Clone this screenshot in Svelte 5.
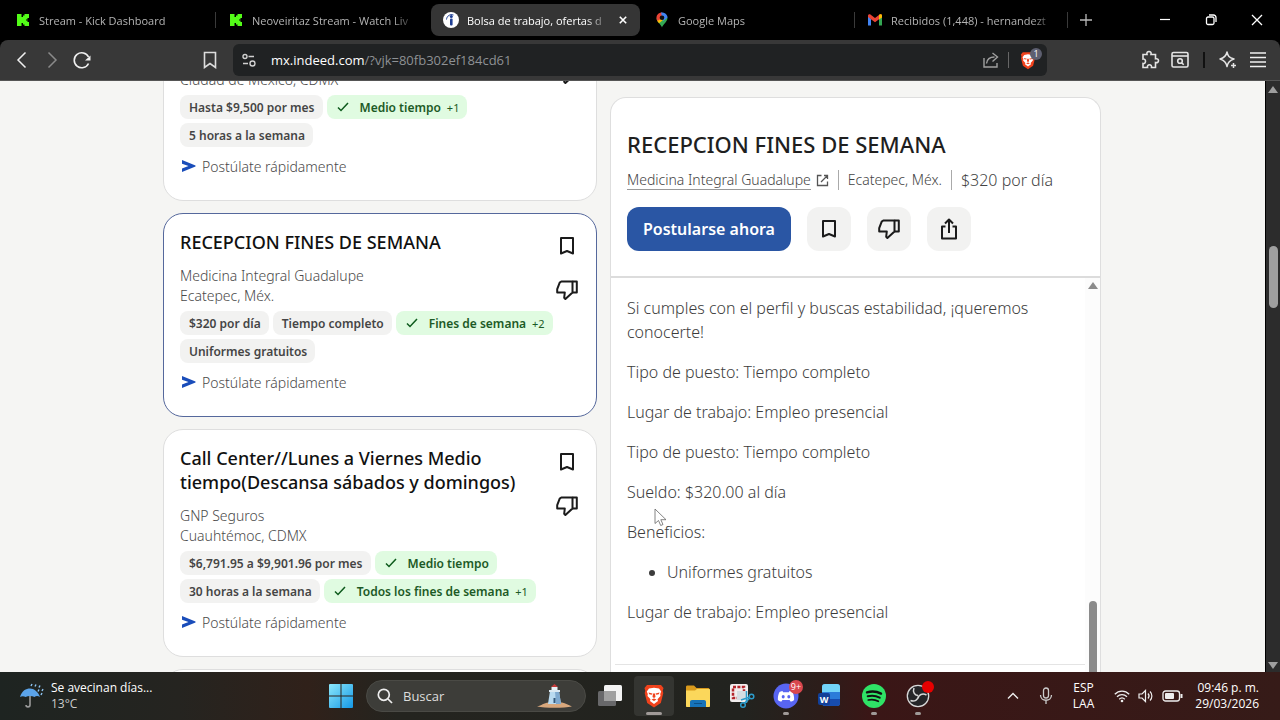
<script lang="ts">
	interface Chip {
		text: string;
		match?: boolean;
		extra?: string;
	}

	interface Job {
		id: number;
		title: string;
		company: string;
		location: string;
		chips: Chip[];
		selected?: boolean;
	}

	const tabs = [
		{ icon: 'kick', title: 'Stream - Kick Dashboard' },
		{ icon: 'kick', title: 'Neoveiritaz Stream - Watch Liv' },
		{ icon: 'indeed', title: 'Bolsa de trabajo, ofertas d', active: true },
		{ icon: 'maps', title: 'Google Maps' },
		{ icon: 'gmail', title: 'Recibidos (1,448) - hernandezt' }
	];

	const jobs: Job[] = [
		{
			id: 1,
			title: '',
			company: '',
			location: 'Ciudad de México, CDMX',
			chips: [
				{ text: 'Hasta $9,500 por mes' },
				{ text: 'Medio tiempo', match: true, extra: '+1' },
				{ text: '5 horas a la semana' }
			]
		},
		{
			id: 2,
			title: 'RECEPCION FINES DE SEMANA',
			company: 'Medicina Integral Guadalupe',
			location: 'Ecatepec, Méx.',
			selected: true,
			chips: [
				{ text: '$320 por día' },
				{ text: 'Tiempo completo' },
				{ text: 'Fines de semana', match: true, extra: '+2' },
				{ text: 'Uniformes gratuitos' }
			]
		},
		{
			id: 3,
			title: 'Call Center//Lunes a Viernes Medio tiempo(Descansa sábados y domingos)',
			company: 'GNP Seguros',
			location: 'Cuauhtémoc, CDMX',
			chips: [
				{ text: '$6,791.95 a $9,901.96 por mes' },
				{ text: 'Medio tiempo', match: true },
				{ text: '30 horas a la semana' },
				{ text: 'Todos los fines de semana', match: true, extra: '+1' }
			]
		}
	];

	const apps = ['taskview', 'brave', 'explorer', 'snip', 'discord', 'word', 'spotify', 'obs'];
	const running = ['discord', 'spotify', 'obs'];
</script>

{#snippet bookmark()}
	<svg width="24" height="24" viewBox="0 0 24 24" fill="none" stroke="#1b1b1b" stroke-width="2" stroke-linejoin="round">
		<path d="M6 4h12v15.500L12 17l-6 2.500z" />
	</svg>
{/snippet}

{#snippet thumbDown()}
	<svg width="24" height="24" viewBox="0 0 24 24" fill="none" stroke="#1b1b1b" stroke-width="2" stroke-linejoin="round">
		<path d="M17.500 3.500H6.300L4.700 4.600 2.200 11.200v3.300h7.600L9.200 19.700l1.200 1.300 7.100-6.600z" />
		<path d="M17.500 3.500h4.300v10.900h-4.300" />
	</svg>
{/snippet}

{#snippet favicon(name: string)}
	{#if name === 'kick'}
		<svg width="16" height="16" viewBox="0 0 16 16">
			<path fill="#53fc18" d="M2 2h4.500v3H8V3.500h1.500V2H14v4h-1.500v1.500H11v1h1.500V10H14v4H9.500v-1.500H8V11H6.500v3H2z" />
		</svg>
	{:else if name === 'indeed'}
		<svg width="16" height="16" viewBox="0 0 16 16">
			<circle cx="8" cy="8" r="8" fill="#fff" />
			<rect x="7" y="6.500" width="2.600" height="7" rx="1" fill="#1f3f94" />
			<circle cx="8.300" cy="4.500" r="1.500" fill="#1f3f94" />
			<path d="M3.500 7.500c.3-3.500 3.500-5.800 7-4.500" fill="none" stroke="#1f3f94" stroke-width="1" />
		</svg>
	{:else if name === 'maps'}
		<svg width="16" height="16" viewBox="0 0 16 16">
			<path fill="#34a853" d="M8 15.500C7 12 2.500 10 2.500 5.700h11C13.500 10 9 12 8 15.500z" />
			<path fill="#fbbc04" d="M2.800 7.500 6 5l3 3-4 3.200C4 10 3 9 2.800 7.500z" />
			<path fill="#ea4335" d="M2.500 5.700C2.500 2.700 5 .5 8 .5L8 6l-4.500 3c-.6-1-1-2-1-3.300z" />
			<path fill="#4285f4" d="M7 .6c3.300-.6 6.500 1.800 6.500 5.100L9 9z" />
			<circle cx="8" cy="5.800" r="2.300" fill="#101010" />
		</svg>
	{:else}
		<svg width="16" height="16" viewBox="0 0 16 16">
			<path fill="#4285f4" d="M1 4v9.500h3V7z" />
			<path fill="#34a853" d="M15 4v9.500h-3V7z" />
			<path fill="#ea4335" d="M1 3.500C1.300 2.300 2.700 2 3.700 2.800L8 6l4.300-3.200c1-.8 2.400-.5 2.700.7V5L8 10.200 1 5z" />
			<path fill="#fbbc04" d="M12 3l.6-.4c1-.6 2.400-.2 2.400 1V5.500L12 7.500z" />
		</svg>
	{/if}
{/snippet}

{#snippet lion()}
	<path fill="#f0421c" d="M5 1.500h14l2.500 3-.8 3 .6 2-2.500 10L12 24l-6.800-4.500-2.500-10 .6-2-.8-3z" />
	<path fill="#fff" d="M7 5l5-.8L17 5l2.200 3-1 2.500.3 2-3 3.300.5 1.700L12 20.500l-4-3 .5-1.700-3-3.300.3-2L4.800 8z" />
	<path fill="#f0421c" d="M6.500 9l4 1-.8 1.300-2.500-.5zM17.500 9l-4 1 .8 1.300 2.500-.5zM11 10h2l.5 3.500-1.500 1-1.500-1zM9.500 16l2.500-1 2.500 1-2.500 1.600z" />
{/snippet}

{#snippet appIcon(name: string)}
	{#if name === 'taskview'}
		<svg width="26" height="24" viewBox="0 0 26 24">
			<rect x="7" y="1" width="18" height="16" rx="1.500" fill="#f3f3f3" />
			<rect x="1" y="7" width="18" height="15" rx="1.500" fill="#68686a" />
			<path fill="#a0a0a0" d="M7 7h12v10H7z" />
		</svg>
	{:else if name === 'brave'}
		<svg width="24" height="26" viewBox="0 0 24 25">{@render lion()}</svg>
	{:else if name === 'explorer'}
		<svg width="26" height="24" viewBox="0 0 26 24">
			<path fill="#d99a1c" d="M1 3c0-1 .6-1.500 1.500-1.500H9l2.500 2.500H23c1 0 1.500.6 1.500 1.500V12H1z" />
			<path fill="#fbd75b" d="M1 6.500h9L12 5h12c.7 0 1 .4 1 1v16c0 .7-.4 1-1 1H2c-.7 0-1-.4-1-1z" />
			<path fill="#1672b8" d="M5 23v-5c0-1.300.8-2 2-2h12c1.200 0 2 .7 2 2v5z" />
			<path stroke="#0c4f86" d="M9 19.500h8" />
		</svg>
	{:else if name === 'snip'}
		<svg width="26" height="26" viewBox="0 0 26 26" fill="none">
			<rect x="1" y="1" width="18" height="18" rx="2" fill="#f2eeee" />
			<rect x="4" y="4" width="11" height="11" stroke="#b3262c" stroke-width="2.500" stroke-dasharray="3 1.400" />
			<path fill="#d5dde2" d="M8 8h9v9H8z" />
			<path stroke="#2c9ccc" stroke-width="1.500" d="M17.500 8v12M12 17l9-3" />
			<circle cx="14" cy="22" r="2.300" stroke="#2c9ccc" stroke-width="1.500" />
			<circle cx="22.500" cy="13.500" r="2.300" stroke="#2c9ccc" stroke-width="1.500" />
			<path stroke="#2c9ccc" stroke-width="1.500" d="M15.500 20l5.500-5" />
		</svg>
	{:else if name === 'discord'}
		<svg width="26" height="26" viewBox="0 0 26 26">
			<circle cx="13" cy="13" r="12.500" fill="#5865f2" />
			<path fill="#fff" d="M9.500 8c-1.300.2-2.400.7-3 1-1.200 2.300-1.800 5-1.600 8 1.200 1 2.600 1.500 3.600 1.600l.9-1.500h7.200l.9 1.500c1-.1 2.400-.6 3.600-1.600.2-3-.4-5.700-1.600-8-.6-.3-1.700-.8-3-1l-.6 1.200h-5.800z" />
			<ellipse cx="10.200" cy="13.800" rx="1.500" ry="1.700" fill="#5865f2" />
			<ellipse cx="15.800" cy="13.800" rx="1.500" ry="1.700" fill="#5865f2" />
		</svg>
		<span class="count">9+</span>
	{:else if name === 'word'}
		<svg width="24" height="26" viewBox="0 0 24 26">
			<rect x="4" y="1" width="18" height="22" rx="3" fill="#2b7cd9" />
			<path fill="#72d4f8" d="M7 1h12a3 3 0 0 1 3 3v5H4V4a3 3 0 0 1 3-3z" />
			<path fill="#174cae" d="M4 16h18v4a3 3 0 0 1-3 3H7a3 3 0 0 1-3-3z" />
			<rect x="0" y="10" width="12" height="12" rx="2" fill="#123f98" />
			<text x="6" y="19.500" text-anchor="middle" font-size="9" font-weight="700" fill="#fff">W</text>
		</svg>
	{:else if name === 'spotify'}
		<svg width="24" height="24" viewBox="0 0 24 24" fill="none" stroke="#111" stroke-linecap="round">
			<circle cx="12" cy="12" r="12" fill="#2fe366" stroke="none" />
			<path stroke-width="2.400" d="M5 8.300c4.500-1.300 10-.9 14 1.300" />
			<path stroke-width="2" d="M5.700 12.300c4-1.100 8.400-.6 12 1.400" />
			<path stroke-width="1.700" d="M6.300 16c3.500-.9 6.900-.5 10 1.300" />
		</svg>
	{:else}
		<svg width="24" height="24" viewBox="0 0 24 24" fill="none">
			<circle cx="12" cy="12" r="10.700" fill="#252528" stroke="#d8d8d8" stroke-width="1.300" />
			<path stroke="#d8d8d8" stroke-width="1.500" d="M8 4c-1.500 4 .5 7 4 7.500M20.500 11c-4-2-8-.5-8.500 3.500M4.500 16.500c4 1.500 7.500-.5 8-4.500" />
		</svg>
		<span class="rec"></span>
	{/if}
{/snippet}

<div class="desktop">
	<header class="tabstrip">
		<div class="tabs">
			{#each tabs as tab}
				<div class="tab" class:active={tab.active}>
					{@render favicon(tab.icon)}
					<span class="tab-title">{tab.title}</span>
					{#if tab.active}
						<button class="tab-close" aria-label="Cerrar pestaña">
							<svg width="8" height="8" viewBox="0 0 10 10" stroke="#fff" stroke-width="2"><path d="M1 1l8 8M9 1L1 9" /></svg>
						</button>
					{/if}
				</div>
			{/each}
			<button class="new-tab" aria-label="Nueva pestaña">
				<svg width="12" height="12" viewBox="0 0 12 12" stroke="#b9b9b9" stroke-width="1.300"><path d="M6 0v12M0 6h12" /></svg>
			</button>
		</div>
		<div class="window-buttons">
			<button aria-label="Minimizar">
				<svg width="12" height="12" viewBox="0 0 12 12" stroke="#fff" stroke-width="1.200"><path d="M1 5.500h10" /></svg>
			</button>
			<button aria-label="Restaurar">
				<svg width="12" height="12" viewBox="0 0 12 12" fill="none" stroke="#fff" stroke-width="1.300">
					<rect x="1.500" y="3" width="7.500" height="7.500" rx="1.500" /><path d="M4 1h4.500A2.500 2.500 0 0 1 11 3.500V8" />
				</svg>
			</button>
			<button aria-label="Cerrar">
				<svg width="12" height="12" viewBox="0 0 12 12" stroke="#fff" stroke-width="1.300"><path d="M1 1l10 10M11 1L1 11" /></svg>
			</button>
		</div>
	</header>

	<nav class="toolbar">
		<div class="nav-left">
			<button aria-label="Atrás">
				<svg width="18" height="18" viewBox="0 0 18 18" fill="none" stroke="#f0f0f0" stroke-width="1.500"><path d="M12.500 1.500L5 9l7.500 7.500" /></svg>
			</button>
			<button aria-label="Adelante">
				<svg width="18" height="18" viewBox="0 0 18 18" fill="none" stroke="#8a8a8a" stroke-width="1.500"><path d="M5.500 1.500L13 9l-7.500 7.500" /></svg>
			</button>
			<button aria-label="Recargar">
				<svg width="18" height="18" viewBox="0 0 18 18" fill="none" stroke="#f0f0f0" stroke-width="1.600">
					<path d="M15.500 12.500A7.500 7.500 0 1 1 15.500 6" /><path fill="#f0f0f0" stroke="none" d="M17.500 4.500v5H12z" />
				</svg>
			</button>
			<button class="save" aria-label="Agregar a favoritos">
				<svg width="18" height="18" viewBox="0 0 18 18" fill="none" stroke="#ddd" stroke-width="1.600"><path d="M3.500 1.500h11v15L9 12.500l-5.500 4z" /></svg>
			</button>
		</div>
		<div class="urlbar">
			<svg width="16" height="16" viewBox="0 0 16 16" fill="none" stroke="#d0d0d0" stroke-width="1.400">
				<circle cx="4" cy="4.500" r="2" /><path d="M7.500 4.500H13M2 11.500h5" /><circle cx="11.500" cy="11.500" r="2.500" />
			</svg>
			<span class="url">mx.indeed.com<span class="path">/?vjk=80fb302ef184cd61</span></span>
			<svg width="18" height="18" viewBox="0 0 18 18" fill="none" stroke="#a0a0a0" stroke-width="1.400">
				<path d="M2 7v9h13v-4M4.500 12.500c.5-4 3.500-6.500 8-6.500M10.500 2l5 4-5 4.500" />
			</svg>
			<span class="bar"></span>
			<span class="shield">
				<svg width="18" height="19" viewBox="0 0 24 25">{@render lion()}</svg>
				<span class="shield-count">1</span>
			</span>
		</div>
		<div class="nav-right">
			<button aria-label="Extensiones">
				<svg width="20" height="20" viewBox="0 0 20 20" fill="none" stroke="#e4e4e4" stroke-width="1.600">
					<path d="M3 4.500h4C6.500 2.500 7.500 1.500 9 1.500s2.500 1 2 3h4.500v4.300c2-.4 3 .6 3 1.900s-1 2.300-3 1.800V17.500h-4c.3-1.700-.6-2.700-2-2.700s-2.400 1-2 2.700H3v-4c1.500.2 2.500-.7 2.500-2.200S4.500 8.800 3 9z" />
				</svg>
			</button>
			<button aria-label="Buscar en pestañas">
				<svg width="20" height="20" viewBox="0 0 20 20" fill="none" stroke="#e4e4e4" stroke-width="1.600">
					<rect x="2" y="2.500" width="16" height="14.500" rx="1.500" /><path d="M2 6h16" /><circle cx="10" cy="11" r="2.300" /><path d="M11.700 12.700l2 2" />
				</svg>
			</button>
			<span class="bar dark"></span>
			<button aria-label="Leo">
				<svg width="20" height="20" viewBox="0 0 20 20" fill="none" stroke="#e4e4e4" stroke-width="1.500" stroke-linejoin="round">
					<path d="M9 2c.8 4 2 5.500 7 7-4.500 1.200-6.200 3-7 7.500-.8-4.500-2.500-6.300-7-7.500 4.700-1.200 6.200-3 7-7z" /><path d="M15.500 13v5M13 15.500h5" />
				</svg>
			</button>
			<button aria-label="Menú">
				<svg width="18" height="18" viewBox="0 0 18 18" stroke="#f0f0f0" stroke-width="1.600"><path d="M1 2h16M1 6.500h16M1 11h16M1 15.500h16" /></svg>
			</button>
		</div>
	</nav>

	<div class="viewport">
		<main class="page">
			<div class="columns">
				<section class="job-list">
					{#each jobs as job (job.id)}
						<article class="card" class:selected={job.selected}>
							<div class="card-top">
								<div class="card-text">
									<h2>{job.title}</h2>
									<p>{job.company}</p>
									<p>{job.location}</p>
								</div>
								<div class="card-actions">
									<button aria-label="Guardar empleo">{@render bookmark()}</button>
									<button aria-label="No me interesa">{@render thumbDown()}</button>
								</div>
							</div>
							<ul class="chips">
								{#each job.chips as chip}
									<li class:match={chip.match}>
										{#if chip.match}
											<svg width="14" height="12" viewBox="0 0 14 12" fill="none" stroke="#0d5a1c" stroke-width="1.500"><path d="M2 6.500L5 9.500l7-7.500" /></svg>
										{/if}
										<span>{chip.text}</span>
										{#if chip.extra}<span class="extra">{chip.extra}</span>{/if}
									</li>
								{/each}
							</ul>
							<div class="quick">
								<svg width="16" height="14" viewBox="0 0 16 14"><path fill="#1a4dba" d="M2 1l13.500 5.500v1L2 13V9.500L8.500 7 2 4.700z" /></svg>
								Postúlate rápidamente
							</div>
						</article>
					{/each}
					<article class="card"></article>
				</section>

				<section class="detail">
					<div class="detail-head">
						<h1>RECEPCION FINES DE SEMANA</h1>
						<div class="facts">
							<a href="#empresa">
								<span class="company">Medicina Integral Guadalupe</span>
								<svg width="13" height="13" viewBox="0 0 13 13" fill="none" stroke="#555" stroke-width="1.300"><path d="M5.500 1.500H1.500v10h10v-4M8 1.500h3.500V5M11.500 1.500L5 8" /></svg>
							</a>
							<span class="place">Ecatepec, Méx.</span>
							<span class="pay">$320 por día</span>
						</div>
						<div class="detail-actions">
							<button class="apply">Postularse ahora</button>
							<button class="round" aria-label="Guardar">{@render bookmark()}</button>
							<button class="round" aria-label="No me interesa">{@render thumbDown()}</button>
							<button class="round" aria-label="Compartir">
								<svg width="24" height="24" viewBox="0 0 24 24" fill="none" stroke="#1b1b1b" stroke-width="2" stroke-linejoin="round">
									<path d="M8.500 9.500H5v12h14v-12h-3.500M12 16V2.500M8 6.500l4-4 4 4" />
								</svg>
							</button>
						</div>
					</div>
					<div class="detail-body">
						<div class="description">
							<p>Si cumples con el perfil y buscas estabilidad, ¡queremos conocerte!</p>
							<p>Tipo de puesto: Tiempo completo</p>
							<p>Lugar de trabajo: Empleo presencial</p>
							<p>Tipo de puesto: Tiempo completo</p>
							<p>Sueldo: $320.00 al día</p>
							<p>Beneficios:</p>
							<ul>
								<li>Uniformes gratuitos</li>
							</ul>
							<p>Lugar de trabajo: Empleo presencial</p>
							<hr />
						</div>
						<div class="inner-scroll">
							<span class="arrow"></span>
							<span class="thumb"></span>
						</div>
						<svg class="cursor" width="13" height="19" viewBox="0 0 13 19" fill="#fff" stroke="#666" stroke-width=".8"><path d="M1 1v14.500l3.500-3 2.200 5 2.300-1-2.200-4.800H12z" /></svg>
					</div>
				</section>
			</div>
		</main>
		<div class="page-scroll">
			<span class="arrow"></span>
			<span class="thumb"></span>
			<span class="arrow down"></span>
		</div>
	</div>

	<footer class="taskbar">
		<div class="weather">
			<svg width="26" height="26" viewBox="0 0 26 26" fill="none">
				<path fill="#5ba4ea" d="M1 14C3 7.500 7 5.500 11 5.500S19 8.500 21 14c-2-1.200-4-1.200-5.500 0-2.500-1.200-6.500-1.200-9 0-1.500-1-4-1-5.500 0z" />
				<path stroke="#9a9a9a" stroke-width="1.600" d="M11 13v9c0 2.500-4 2.500-4 0" />
				<path stroke="#8fc6f5" stroke-width="1.400" d="M12 3l1-2M16 3.500l1-2M20 4.500l1-2M19 8.500l1-2M23 8l1-2M22 12l1-2" />
			</svg>
			<div>
				<div>Se avecinan días...</div>
				<div class="temp">13°C</div>
			</div>
		</div>
		<div class="dock">
			<button class="tile" aria-label="Inicio">
				<svg width="24" height="24" viewBox="0 0 24 24">
					<defs>
						<linearGradient id="win" x1="0" y1="0" x2="1" y2="1"><stop offset="0" stop-color="#8ce8fb" /><stop offset="1" stop-color="#1498e6" /></linearGradient>
					</defs>
					<path fill="url(#win)" d="M1 0h10.500v11.500H0V1a1 1 0 0 1 1-1zM12.500 0H23a1 1 0 0 1 1 1v10.500H12.500zM0 12.500h11.500V24H1a1 1 0 0 1-1-1zM12.500 12.500H24V23a1 1 0 0 1-1 1H12.500z" />
				</svg>
			</button>
			<label class="search">
				<svg width="16" height="16" viewBox="0 0 16 16" fill="none" stroke="#eee" stroke-width="1.700"><circle cx="6.800" cy="6.800" r="5.500" /><path d="M11 11l4 4" /></svg>
				<input type="text" placeholder="Buscar" aria-label="Buscar" />
				<svg width="36" height="24" viewBox="0 0 36 24">
					<path fill="#d8a77c" d="M0 22.500c5-1 6-3.500 12-4h13c4 .5 6 2.500 10 4-8 1.800-27 1.800-35 0z" />
					<path fill="#b9daf0" d="M13 7h9l2 13H11z" />
					<path fill="#7fa9cf" d="M18 7h4l2 13h-5z" />
					<path fill="#dce9f2" d="M12 6h11v2H12z" />
					<path fill="#e9f2f8" d="M14.500 3h6v3h-6z" />
					<path fill="#c43b3b" d="M14 3l3.500-3L21 3z" />
					<path fill="#33597d" d="M16.500 14h2v5h-2z" />
				</svg>
			</label>
			{#each apps as app}
				<button class="tile" class:current={app === 'brave'} class:running={running.includes(app)} aria-label={app}>
					<span class="glyph">{@render appIcon(app)}</span>
				</button>
			{/each}
		</div>
		<div class="tray">
			<svg width="12" height="12" viewBox="0 0 12 12" fill="none" stroke="#eee" stroke-width="1.400"><path d="M1 8.500l5-5 5 5" /></svg>
			<svg width="14" height="18" viewBox="0 0 14 18" fill="none" stroke="#ccc" stroke-width="1.300"><rect x="4.500" y="1" width="5" height="10" rx="2.500" /><path d="M1.500 8c0 7 11 7 11 0M7 13.500V17" /></svg>
			<div>ESP<br />LAA</div>
			<div class="status">
				<svg width="16" height="16" viewBox="0 0 16 16" fill="none" stroke="#eee" stroke-width="1.300"><path d="M.8 6.300c4-4.300 10.400-4.300 14.400 0M3 8.800c3-3 7-3 10 0M5.200 11.200c1.700-1.600 3.900-1.600 5.600 0" /><circle cx="8" cy="13" r="1.300" fill="#eee" stroke="none" /></svg>
				<svg width="16" height="16" viewBox="0 0 16 16" fill="none" stroke="#eee" stroke-width="1.200"><path d="M1 6v4h3l3.500 3.500v-11L4 6zM10 5.500c1.300 1.500 1.300 3.500 0 5M12 3.500c2.500 2.500 2.500 6.500 0 9" /></svg>
				<svg width="21" height="12" viewBox="0 0 21 12" fill="none" stroke="#eee" stroke-width="1.300"><rect x="1" y="1" width="16.500" height="10" rx="2.500" /><rect x="3" y="3" width="9" height="6" rx="1" fill="#eee" stroke="none" /><path d="M19.500 4v4" stroke-width="2" /></svg>
			</div>
			<div class="clock">09:46 p. m.<br />29/03/2026</div>
		</div>
	</footer>
</div>

<style>
	:global(body) {
		margin: 0;
		background: #000;
	}

	.desktop {
		display: flex;
		flex-direction: column;
		height: 100vh;
		overflow: hidden;
		font-family: 'Open Sans', 'Noto Sans', sans-serif;
		font-size: 12px;
		color: #fff;
	}

	.desktop :is(h1, h2, p, ul) {
		margin: 0;
		padding: 0;
	}

	button {
		display: flex;
		align-items: center;
		justify-content: center;
		padding: 0;
		border: none;
		background: none;
		font: inherit;
		color: inherit;
	}

	svg {
		flex: none;
		display: block;
	}

	/* tab strip */
	.tabstrip {
		display: flex;
		justify-content: space-between;
		flex: none;
		height: 40px;
		background: #000;
	}

	.tabs {
		display: flex;
		align-items: center;
		flex: 1;
		min-width: 0;
		padding-left: 3px;
	}

	.tab {
		display: flex;
		align-items: center;
		gap: 8px;
		flex: 0 1 213px;
		min-width: 0;
		height: 32px;
		box-sizing: border-box;
		padding: 0 12px;
		color: #b4b4b4;
		font-size: 11px;
	}

	.tab:first-child,
	.tab:nth-child(4),
	.tab:nth-child(5) {
		background: linear-gradient(#3a3a3a, #3a3a3a) right center / 1px 16px no-repeat;
	}

	.tab.active {
		flex-basis: 209px;
		margin: 0 2px;
		border-radius: 8px;
		background: #353535;
		color: #fff;
	}

	.tab-title {
		flex: 1;
		min-width: 0;
		overflow: hidden;
		white-space: nowrap;
		mask-image: linear-gradient(to right, #000 calc(100% - 24px), transparent);
	}

	.tab-close {
		width: 10px;
		height: 16px;
	}

	.new-tab {
		width: 36px;
		height: 32px;
	}

	.window-buttons {
		display: flex;
	}

	.window-buttons button {
		width: 46px;
	}

	/* toolbar */
	.toolbar {
		display: grid;
		grid-template-columns: 233px 1fr 233px;
		align-items: center;
		flex: none;
		height: 40px;
		border-bottom: 1px solid #555;
		border-radius: 8px 8px 0 0;
		background: #383838;
	}

	.nav-left,
	.nav-right {
		display: flex;
		align-items: center;
	}

	.nav-left {
		padding-left: 7px;
		padding-right: 8px;
	}

	.nav-left button,
	.nav-right button {
		width: 30px;
		height: 30px;
	}

	.nav-left .save {
		margin-left: auto;
	}

	.nav-right {
		justify-content: flex-end;
		padding-right: 7px;
	}

	.urlbar {
		display: flex;
		align-items: center;
		gap: 8px;
		height: 32px;
		padding: 0 8px;
		border-radius: 6px;
		background: #202223;
	}

	.url {
		flex: 1;
		padding-left: 6px;
		font-size: 13px;
	}

	.path {
		color: #8e9194;
	}

	.bar {
		width: 1px;
		height: 16px;
		background: #666;
	}

	.bar.dark {
		width: 2px;
		margin: 0 8px;
		background: #111;
	}

	.shield {
		position: relative;
		display: flex;
		padding: 0 2px;
	}

	.shield-count {
		position: absolute;
		top: -3px;
		right: -3px;
		width: 12px;
		height: 12px;
		border-radius: 6px;
		background: #5d5f70;
		font-size: 9px;
		line-height: 12px;
		text-align: center;
	}

	/* page */
	.viewport {
		display: flex;
		flex: 1;
		min-height: 0;
	}

	.page {
		flex: 1;
		overflow: hidden;
		background: #f5f5f3;
		color: #2d2d2d;
		font-family: 'Noto Sans', sans-serif;
	}

	.columns {
		display: grid;
		grid-template-columns: 434fr 491fr;
		grid-template-rows: minmax(0, 1fr);
		gap: 13px;
		max-width: 938px;
		height: 100%;
		margin: 0 auto;
		padding-right: 1px;
	}

	.job-list {
		display: flex;
		flex-direction: column;
		gap: 12px;
		margin-top: -84px;
	}

	.card {
		flex: none;
		padding: 16px 16px 22px;
		border: 1px solid #dedede;
		border-radius: 20px;
		background: #fff;
	}

	.card.selected {
		border-color: #55689c;
	}

	.card-top {
		display: flex;
		justify-content: space-between;
	}

	.card-text h2 {
		min-height: 24px;
		margin-bottom: 12px;
		font-size: 18px;
		font-weight: 500;
		line-height: 24px;
		color: #111;
	}

	.card-text p {
		min-height: 20px;
		font-size: 14px;
		font-weight: 300;
		line-height: 20px;
		color: #4a4a4a;
	}

	.card-actions {
		flex: none;
		margin: -6px -9px -20px 0;
	}

	.card-actions button {
		width: 44px;
		height: 44px;
	}

	.chips {
		display: flex;
		flex-wrap: wrap;
		gap: 4px;
		margin-top: 5px !important;
		list-style: none;
	}

	.chips li {
		display: flex;
		align-items: center;
		height: 24px;
		padding: 0 8px 0 9px;
		border-radius: 8px;
		background: #f2f2f1;
		font-size: 12px;
		font-weight: 600;
		color: #454545;
	}

	.chips li.match {
		background: #e0fbe1;
		color: #1c5a26;
	}

	.chips li svg {
		margin-right: 10px;
	}

	.chips .extra {
		margin-left: 6px;
		font-size: 11px;
		font-weight: 400;
	}

	.quick {
		display: flex;
		align-items: center;
		gap: 6px;
		height: 24px;
		margin-top: 7px;
		font-size: 14px;
		font-weight: 300;
		color: #4a4a4a;
	}

	/* detail panel */
	.detail {
		display: flex;
		flex-direction: column;
		min-height: 0;
		margin-top: 16px;
		border: 1px solid #dedede;
		border-bottom: none;
		border-radius: 16px 16px 0 0;
		background: #fff;
	}

	.detail-head {
		flex: none;
		padding: 31px 16px 25px;
		border-bottom: 2px solid #dcdcdc;
	}

	h1 {
		font-size: 22px;
		font-weight: 500;
		line-height: 30px;
		color: #1f1f1f;
	}

	.facts {
		display: flex;
		align-items: center;
		height: 20px;
		margin: 11px 0 17px;
		font-size: 14px;
		font-weight: 300;
		color: #444;
	}

	.facts a {
		display: flex;
		align-items: center;
		gap: 5px;
		color: inherit;
		text-decoration: none;
	}

	.company {
		border-bottom: 1px solid #999;
		line-height: 18px;
	}

	.place,
	.pay {
		margin-left: 9px;
		padding-left: 9px;
		border-left: 1px solid #aaa;
		line-height: 20px;
	}

	.pay {
		font-size: 16px;
	}

	.detail-actions {
		display: flex;
		gap: 16px;
	}

	.apply {
		width: 164px;
		height: 44px;
		border-radius: 12px;
		background: #2a56a4;
		color: #fff;
		font-size: 16px;
		font-weight: 600;
	}

	.round {
		width: 44px;
		height: 44px;
		border-radius: 12px;
		background: #f2f2f1;
	}

	.detail-body {
		position: relative;
		display: flex;
		flex: 1;
		min-height: 0;
		overflow: hidden;
	}

	.description {
		flex: 1;
		padding: 18px 0 0 16px;
		font-size: 16px;
		font-weight: 300;
		line-height: 24px;
		color: #3c3c3c;
	}

	.description p,
	.description ul {
		margin-bottom: 16px !important;
		padding-right: 16px;
	}

	.description ul {
		padding-left: 40px !important;
	}

	.description hr {
		margin: 40px 0 0 -12px;
		border: none;
		border-top: 1px solid #e4e4e4;
	}

	.inner-scroll {
		display: flex;
		flex-direction: column;
		justify-content: space-between;
		align-items: center;
		width: 15px;
		padding-top: 4px;
		background: #fcfcfc;
	}

	.arrow {
		border: 5px solid transparent;
		border-top: none;
		border-bottom: 7px solid #8b8b8b;
	}

	.thumb {
		flex: none;
		width: 8px;
		height: 71px;
		border-radius: 4px 4px 0 0;
		background: #8b8b8b;
	}

	.cursor {
		position: absolute;
		left: 43px;
		top: 230px;
	}

	.page-scroll {
		display: flex;
		flex-direction: column;
		align-items: center;
		width: 14px;
		padding: 5px 0 3px;
		border-left: 1px solid #000;
		background: #2c2c2c;
	}

	.page-scroll .arrow {
		border-bottom-color: #9f9f9f;
	}

	.page-scroll .thumb {
		width: 9px;
		height: 62px;
		margin: 153px 0 auto;
		border-radius: 5px;
		background: #9f9f9f;
	}

	.page-scroll .down {
		transform: rotate(180deg);
	}

	/* taskbar */
	.taskbar {
		display: grid;
		grid-template-columns: 1fr auto 1fr;
		align-items: center;
		flex: none;
		height: 48px;
		padding-right: 21px;
		background: linear-gradient(to right, #1e2421 0, #252420 14%, #30211a 24%, #24241f 31%, #22231f 58%, #2c1d1a 64%, #3a1616 68%, #361b18 100%);
	}

	.weather {
		display: flex;
		align-items: center;
		gap: 6px;
		padding-left: 19px;
		line-height: 16px;
	}

	.temp {
		color: #ccc;
	}

	.dock {
		display: flex;
		align-items: center;
	}

	.tile {
		position: relative;
		width: 44px;
		height: 48px;
	}

	.tile.current::before {
		content: '';
		position: absolute;
		inset: 4px 2px;
		border-radius: 4px;
		background: #343531;
	}

	.tile.current::after,
	.tile.running::after {
		content: '';
		position: absolute;
		left: 50%;
		bottom: 5px;
		width: 6px;
		height: 3px;
		margin-left: -3px;
		border-radius: 2px;
		background: #a09a98;
	}

	.tile.current::after {
		width: 16px;
		margin-left: -8px;
	}

	.glyph {
		position: relative;
		display: flex;
	}

	.count {
		position: absolute;
		top: -3px;
		right: -4px;
		width: 14px;
		height: 14px;
		border-radius: 7px;
		background: #d9474e;
		font-size: 9px;
		line-height: 14px;
		text-align: center;
	}

	.rec {
		position: absolute;
		top: -3px;
		right: -4px;
		width: 12px;
		height: 12px;
		border-radius: 6px;
		background: #e80000;
	}

	.search {
		display: flex;
		align-items: center;
		gap: 10px;
		width: 220px;
		height: 32px;
		box-sizing: border-box;
		margin: 0 2px 0 3px;
		padding: 0 12px 0 10px;
		border: 1px solid #4a4a45;
		border-radius: 16px;
		background: #3d3d39;
	}

	.search input {
		flex: 1;
		min-width: 0;
		padding: 0;
		border: none;
		background: none;
		outline: none;
		font: inherit;
		font-size: 13px;
		color: #fff;
	}

	.search input::placeholder {
		color: #ddd;
		opacity: 1;
	}

	.tray {
		display: flex;
		align-items: center;
		justify-content: flex-end;
		gap: 20px;
		line-height: 16px;
		text-align: center;
	}

	.status {
		display: flex;
		align-items: center;
		gap: 8px;
		margin-right: -8px;
	}

	.clock {
		text-align: right;
	}
</style>
